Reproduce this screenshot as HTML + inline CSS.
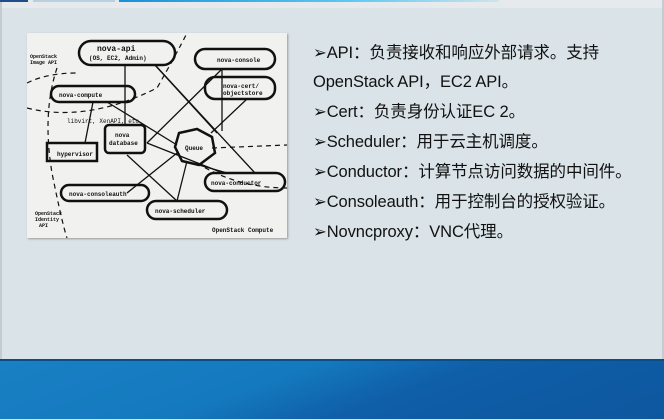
<!DOCTYPE html>
<html><head><meta charset="utf-8"><style>
*{margin:0;padding:0}
body{width:664px;height:420px;overflow:hidden;background:#d9e3e8;position:relative;font-family:"Liberation Sans","Noto Sans CJK SC",sans-serif}
.t{position:absolute;left:313px;font-size:16.5px;color:#111;white-space:nowrap;line-height:20px;letter-spacing:-0.1px}
</style></head><body>
<div style="position:absolute;left:0;top:0;width:664px;height:8px;background:#e6eaec"></div>
<div style="position:absolute;left:0;top:0;width:2px;height:359px;background:#c4ccd0"></div>
<div style="position:absolute;right:0;top:0;width:2px;height:359px;background:#c4ccd0"></div>
<div style="position:absolute;left:0;top:0;width:28px;height:2px;background:#1e4f88"></div>
<div style="position:absolute;left:33px;top:0;width:82px;height:2px;background:#b8d0e0"></div>
<div style="position:absolute;left:119px;top:0;width:380px;height:2px;background:linear-gradient(90deg,#1a8fd8,#5ac8f0 60%,#d0e4ee)"></div>
<div style="position:absolute;left:0;top:359px;width:664px;height:60px;background:linear-gradient(160deg,#1a80c4 0%,#1479be 40%,#0f5ea8 60%,#0d579e 100%)"></div>
<div style="position:absolute;left:0;top:359px;width:664px;height:2px;background:#0b4d86"></div>
<div style="position:absolute;left:27px;top:33px;width:260px;height:205px;background:#f1f1ef;box-shadow:1px 1px 2px #999">
<svg width="260" height="205" viewBox="0 0 260 205" font-family="Liberation Mono,monospace" font-weight="bold" fill="none" stroke="#111">
<g stroke-width="2.5">
<rect x="52" y="8" width="96" height="24" rx="12"/>
<rect x="168" y="16" width="80" height="20" rx="10"/>
<rect x="178" y="44" width="70" height="22" rx="10"/>
<rect x="24" y="53" width="84" height="16" rx="8"/>
<rect x="20" y="110" width="50" height="18"/>
<rect x="78" y="92" width="40" height="28" rx="4"/>
<polygon points="152,100 170,96 185,104 188,120 172,132 155,128 148,114"/>
<rect x="178" y="140" width="80" height="18" rx="9"/>
<rect x="34" y="152" width="88" height="16" rx="8"/>
<rect x="120" y="168" width="80" height="18" rx="9"/>
</g>
<g stroke-width="1.3">
<line x1="98" y1="32" x2="98" y2="92"/><line x1="128" y1="32" x2="190" y2="100"/><line x1="128" y1="32" x2="228" y2="140"/>
<line x1="195" y1="36" x2="195" y2="98"/><line x1="195" y1="36" x2="120" y2="110"/><line x1="220" y1="66" x2="184" y2="100"/>
<line x1="80" y1="69" x2="150" y2="112"/><line x1="66" y1="69" x2="58" y2="110"/><line x1="120" y1="110" x2="196" y2="140"/>
<line x1="150" y1="120" x2="100" y2="160"/><line x1="160" y1="128" x2="150" y2="168"/><line x1="100" y1="122" x2="150" y2="168"/>
<line x1="172" y1="132" x2="200" y2="140"/>
</g>
<g stroke-width="1.2" stroke-dasharray="5,4">
<path d="M0 75 Q60 90 130 55 Q150 20 160 0"/><path d="M30 35 Q15 80 25 140 Q35 190 40 205"/><path d="M185 115 L260 112"/><path d="M170 130 Q210 155 260 155"/><path d="M0 50 Q20 40 50 40"/>
</g>
<g fill="#111" stroke="none" font-size="6">
<text x="70" y="18" font-size="8">nova-api</text><text x="62" y="27">(OS, EC2, Admin)</text>
<text x="190" y="29">nova-console</text><text x="196" y="55">nova-cert/</text><text x="196" y="62">objectstore</text>
<text x="32" y="64">nova-compute</text><text x="30" y="123">hypervisor</text><text x="88" y="104">nova</text><text x="82" y="112">database</text>
<text x="158" y="117">Queue</text><text x="184" y="152">nova-conductor</text><text x="42" y="163">nova-consoleauth</text><text x="128" y="180">nova-scheduler</text>
<text x="40" y="90" font-weight="normal">libvirt, XenAPI, etc.</text>
<text x="3" y="25" font-size="5">OpenStack</text><text x="3" y="31" font-size="5">Image API</text>
<text x="8" y="182" font-size="5">OpenStack</text><text x="8" y="188" font-size="5">Identity</text><text x="12" y="194" font-size="5">API</text>
<text x="185" y="199">OpenStack Compute</text>
</g></svg></div>
<div class="t" style="top:43px">➢API：负责接收和响应外部请求。支持</div>
<div class="t" style="top:72px">OpenStack API，EC2 API。</div>
<div class="t" style="top:102px">➢Cert：负责身份认证EC 2。</div>
<div class="t" style="top:132px">➢Scheduler：用于云主机调度。</div>
<div class="t" style="top:162px">➢Conductor：计算节点访问数据的中间件。</div>
<div class="t" style="top:192px">➢Consoleauth：用于控制台的授权验证。</div>
<div class="t" style="top:222px">➢Novncproxy：VNC代理。</div>
</body></html>
